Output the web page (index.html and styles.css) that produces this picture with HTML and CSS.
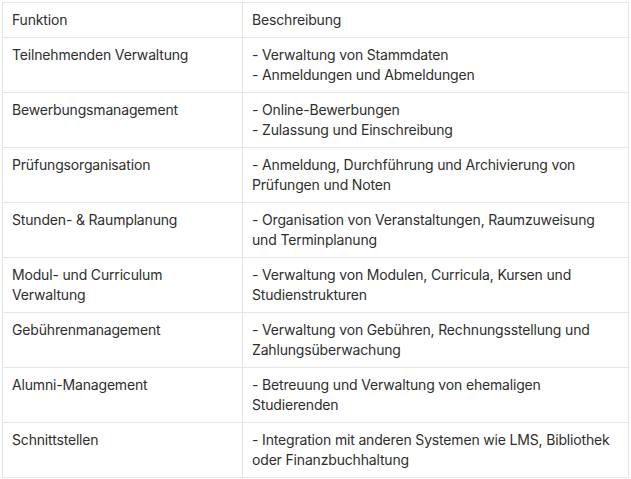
FILE: index.html
```html
<!DOCTYPE html>
<html lang="de">
<head>
<meta charset="utf-8">
<title>Funktionen</title>
<link rel="stylesheet" href="styles.css">
</head>
<body>
<table class="features">
  <thead>
    <tr><th class="col-func">Funktion</th><th>Beschreibung</th></tr>
  </thead>
  <tbody>
    <tr><td>Teilnehmenden Verwaltung</td><td>- Verwaltung von Stammdaten<br>- Anmeldungen und Abmeldungen</td></tr>
    <tr><td>Bewerbungsmanagement</td><td>- Online-Bewerbungen<br>- Zulassung und Einschreibung</td></tr>
    <tr><td>Prüfungsorganisation</td><td>- Anmeldung, Durchführung und Archivierung von Prüfungen und Noten</td></tr>
    <tr><td>Stunden- &amp; Raumplanung</td><td>- Organisation von Veranstaltungen, Raumzuweisung und Terminplanung</td></tr>
    <tr><td>Modul- und Curriculum Verwaltung</td><td>- Verwaltung von Modulen, Curricula, Kursen und Studienstrukturen</td></tr>
    <tr><td>Gebührenmanagement</td><td>- Verwaltung von Gebühren, Rechnungsstellung und Zahlungsüberwachung</td></tr>
    <tr><td>Alumni-Management</td><td>- Betreuung und Verwaltung von ehemaligen Studierenden</td></tr>
    <tr><td>Schnittstellen</td><td>- Integration mit anderen Systemen wie LMS, Bibliothek oder Finanzbuchhaltung</td></tr>
  </tbody>
</table>
</body>
</html>
```

FILE: styles.css
```css
html, body {
  background: #ffffff;
}
body {
  margin: 2px;
  font-family: Inter, "Noto Sans", sans-serif;
  font-size: 14px;
  line-height: 20px;
  letter-spacing: -0.17px;
  color: #2e2e2e;
}
.features {
  border-collapse: collapse;
  width: 627px;
  table-layout: fixed;
}
.features th,
.features td {
  border: 1px solid #e5e5e5;
  padding: 7px 9px;
  text-align: left;
  vertical-align: top;
  font-weight: 400;
}
.features td {
  height: 40px;
}
.col-func {
  width: 221px;
}
```
